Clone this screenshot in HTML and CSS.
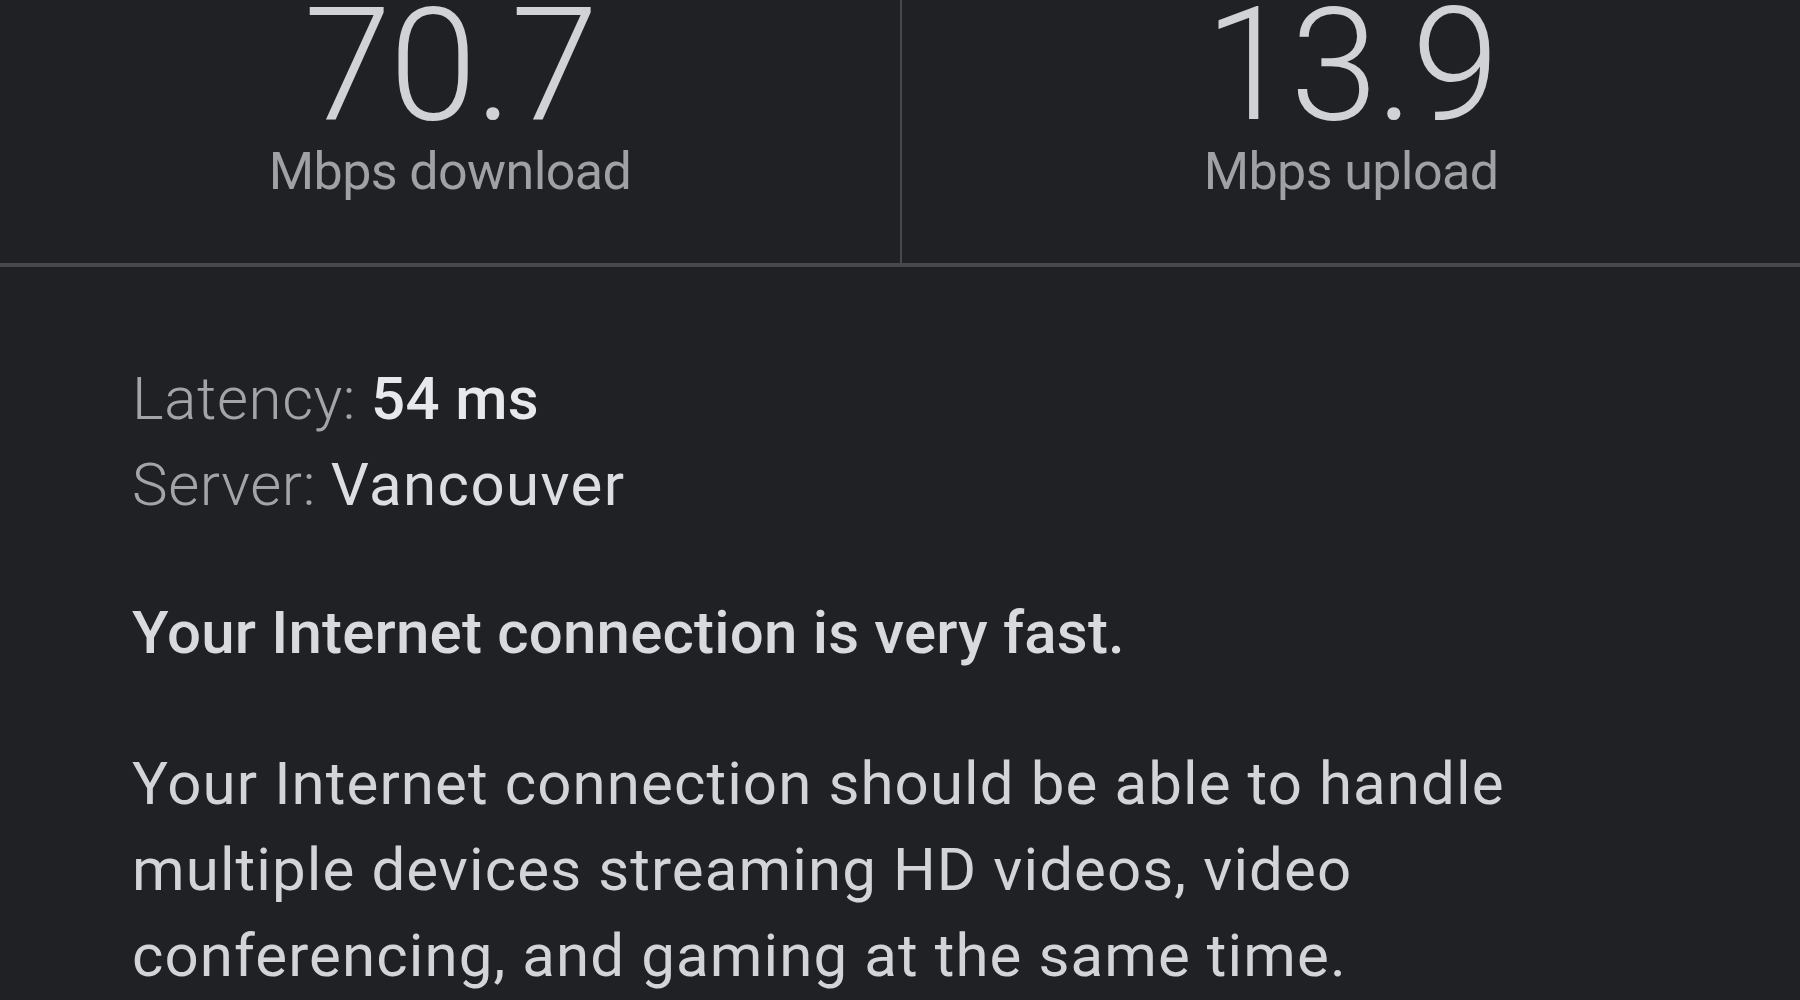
FILE: index.html
```html
<!DOCTYPE html>
<html lang="en">
<head>
<meta charset="utf-8">
<title>Speed test results</title>
<link rel="stylesheet" href="styles.css">
</head>
<body>
<main class="page">
  <section class="results">
    <div class="result result--down">
      <div class="result__value">70.7</div>
      <div class="result__unit">Mbps download</div>
    </div>
    <div class="result">
      <div class="result__value">13.9</div>
      <div class="result__unit">Mbps upload</div>
    </div>
  </section>
  <section class="details">
    <div class="meta">
      <div class="meta__row"><span class="meta__label">Latency:</span> <span class="meta__value">54 ms</span></div>
      <div class="meta__row"><span class="meta__label">Server:</span> <span class="meta__value meta__value--server">Vancouver</span></div>
    </div>
    <p class="verdict">Your Internet connection is very fast.</p>
    <p class="summary">Your Internet connection should be able to handle multiple devices streaming HD videos, video conferencing, and gaming at the same time.</p>
  </section>
</main>
</body>
</html>
```
FILE: styles.css
```css
html, body {
  margin: 0;
  padding: 0;
  background: #202124;
  height: 100%;
  overflow: hidden;
}

.page {
  font-family: Roboto, "Liberation Sans", Arial, sans-serif;
  color: #d4d6d9;
}

.results {
  display: grid;
  grid-template-columns: 902px 1fr;
  border-bottom: 4px solid #46484c;
}

.result {
  display: flex;
  flex-direction: column;
  align-items: center;
  padding-bottom: 60px;
}

.result--down {
  border-right: 2px solid #46484c;
}

.result__value {
  font-size: 158px;
  font-weight: 300;
  line-height: 130px;
  letter-spacing: -2px;
  color: #d0d2d5;
}

.result__unit {
  margin-top: 11px;
  font-size: 52px;
  font-weight: 400;
  line-height: 62px;
  letter-spacing: -0.6px;
  color: #9fa1a4;
}

.details {
  padding: 89px 132px 0;
  font-size: 60px;
  line-height: 86px;
}

.meta__label {
  font-weight: 300;
  letter-spacing: 0.6px;
  color: #a2a4a7;
}

.meta__value {
  font-weight: 500;
  letter-spacing: 0.4px;
  color: #e6e8eb;
}

.meta__value--server {
  font-weight: 400;
  letter-spacing: 1.4px;
  color: #dcdee1;
}

.verdict {
  margin: 62px 0 0;
  font-weight: 500;
  letter-spacing: 0.2px;
  color: #d8dadd;
}

.summary {
  margin: 65px 0 0;
  font-weight: 400;
  letter-spacing: 1.1px;
  color: #d2d4d7;
}
```
